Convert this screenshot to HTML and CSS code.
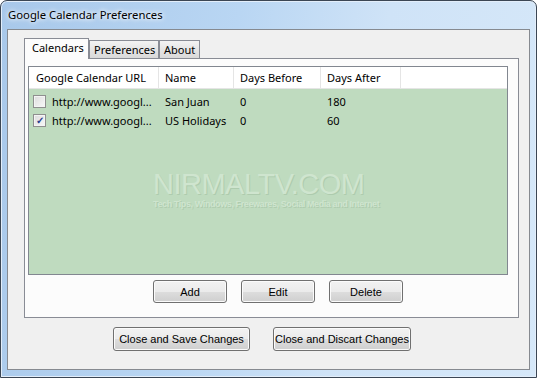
FILE: index.html
```html
<!DOCTYPE html>
<html lang="en">
<head>
    <meta charset="UTF-8">
    <title>Google Calendar Preferences</title>
    <link rel="stylesheet" href="styles.css">
</head>
<body>
    <div class="window">
        <div class="titlebar">Google Calendar Preferences</div>
        <div class="client">
            <!-- Tabs -->
            <div class="tab-strip">
                <div class="tab selected">Calendars</div>
                <div class="tab tab-prefs">Preferences</div>
                <div class="tab tab-about">About</div>
            </div>
            <div class="tab-panel">
                <div class="listview">
                    <div class="list-row list-header">
                        <div class="cell">Google Calendar URL</div>
                        <div class="cell">Name</div>
                        <div class="cell">Days Before</div>
                        <div class="cell">Days After</div>
                        <div class="cell last"></div>
                    </div>
                    <div class="list-body">
                        <div class="list-row item">
                            <div class="cell url"><span class="checkbox"></span>http://www.googl...</div>
                            <div class="cell">San Juan</div>
                            <div class="cell">0</div>
                            <div class="cell">180</div>
                            <div class="cell last"></div>
                        </div>
                        <div class="list-row item">
                            <div class="cell url"><span class="checkbox checked">&#10003;</span>http://www.googl...</div>
                            <div class="cell">US Holidays</div>
                            <div class="cell">0</div>
                            <div class="cell">60</div>
                            <div class="cell last"></div>
                        </div>
                        <div class="watermark">
                            <div class="wm-title">NIRMALTV.COM</div>
                            <div class="wm-sub">Tech Tips, Windows, Freewares, Social Media and Internet</div>
                        </div>
                    </div>
                </div>
                <div class="list-buttons">
                    <button class="btn small">Add</button>
                    <button class="btn small">Edit</button>
                    <button class="btn small">Delete</button>
                </div>
            </div>
            <div class="dialog-buttons">
                <button class="btn wide">Close and Save Changes</button>
                <button class="btn wide discard">Close and Discart Changes</button>
            </div>
        </div>
    </div>
</body>
</html>
```

FILE: styles.css
```css
* {
    box-sizing: border-box;
}
body {
    margin: 0;
    background-color: #fff;
    font-family: "Noto Sans", "Open Sans", sans-serif;
    font-size: 11px;
    color: #000;
}
.window {
    width: 537px;
    height: 378px;
    border: 1px solid #3b4654;
    border-radius: 7px 7px 0 0;
    padding: 0 6px 7px 6px;
    background: linear-gradient(100deg, #a8c8ea 0%, #b9d6f3 40%, #cfe3f7 65%, #d6e8f9 100%);
    box-shadow: inset 0 0 0 1px #e3eefa;
}
.titlebar {
    height: 28px;
    padding: 5px 0 0 1px;
    line-height: 17px;
    font-size: 11.3px;
    color: #000;
    text-shadow: 0 0 6px #fff, 0 0 4px #fff;
}
.client {
    height: 341px;
    border: 1px solid #868a90;
    background-color: #f0f0f0;
}

/* Tabs */
.tab-strip {
    display: flex;
    align-items: flex-end;
    height: 28px;
    padding-left: 16px;
}
.tab {
    height: 18px;
    border: 1px solid #898c95;
    border-bottom: none;
    background: linear-gradient(#f3f3f3, #e5e5e5 50%, #d9d9d9);
    line-height: 17px;
    padding-left: 4px;
}
.tab.selected {
    width: 65px;
    height: 21px;
    margin-bottom: -1px;
    background: #fcfcfc;
    padding-left: 7px;
    line-height: 18px;
    position: relative;
    z-index: 1;
}
.tab-prefs {
    width: 70px;
}
.tab-about {
    width: 41px;
}
.tab-panel {
    width: 495px;
    height: 260px;
    margin-left: 16px;
    border: 1px solid #898c95;
    background-color: #fcfcfc;
    padding: 7px 0 0 3px;
}

/* List view */
.listview {
    width: 480px;
    height: 209px;
    border: 1px solid #828790;
    background-color: #bfdbbf;
    display: flex;
    flex-direction: column;
}
.list-row {
    display: grid;
    grid-template-columns: 130px 75px 87px 80px 1fr;
}
.list-header {
    height: 22px;
    background-color: #fff;
    border-bottom: 1px solid #e5e5e5;
}
.list-header .cell {
    border-right: 1px solid #e5e5e5;
    line-height: 21px;
    padding-left: 6px;
}
.list-header .cell:first-child {
    padding-left: 7px;
}
.list-header .cell.last {
    border-right: none;
}
.list-body {
    position: relative;
    flex: 1;
    padding-top: 3px;
}
.item {
    height: 19px;
    line-height: 19px;
}
.item .cell {
    padding-left: 6px;
    white-space: nowrap;
}
.item .cell.url {
    display: flex;
    align-items: center;
    padding-left: 4px;
}
.checkbox {
    flex-shrink: 0;
    width: 13px;
    height: 13px;
    margin-right: 6px;
    border: 1px solid #8f8f8f;
    background: linear-gradient(135deg, #dcdcdc, #f8f8f8);
    box-shadow: inset 0 0 0 1px #f4f4f4;
    font-size: 10px;
    line-height: 11px;
    text-align: center;
    color: #2a3f8f;
    font-weight: bold;
}

/* Watermark over the list */
.watermark {
    position: absolute;
    left: 124px;
    top: 80px;
    color: #cfe5cf;
    text-shadow: 1px 1px 0 #aecbae;
}
.wm-title {
    font-family: "Liberation Sans", sans-serif;
    font-size: 29px;
    line-height: 30px;
    letter-spacing: -0.5px;
}
.wm-sub {
    font-family: "Liberation Sans", sans-serif;
    font-size: 9px;
    font-weight: bold;
    letter-spacing: -0.4px;
    line-height: 10px;
}

/* Buttons */
.btn {
    height: 23px;
    padding: 0;
    border: 1px solid #707070;
    border-radius: 3px;
    background: linear-gradient(#f2f2f2, #ebebeb 50%, #dddddd 51%, #cfcfcf);
    box-shadow: inset 0 0 0 1px #fbfbfb;
    font-family: "Liberation Sans", Arial, sans-serif;
    font-size: 11px;
    color: #000;
    white-space: nowrap;
}
.list-buttons {
    display: flex;
    gap: 14px;
    margin-top: 5px;
    padding-left: 125px;
}
.btn.small {
    width: 74px;
}
.dialog-buttons {
    display: flex;
    gap: 23px;
    margin-top: 9px;
    padding-left: 105px;
}
.btn.wide {
    width: 137px;
    height: 24px;
}
.btn.discard {
    width: 138px;
}
```
